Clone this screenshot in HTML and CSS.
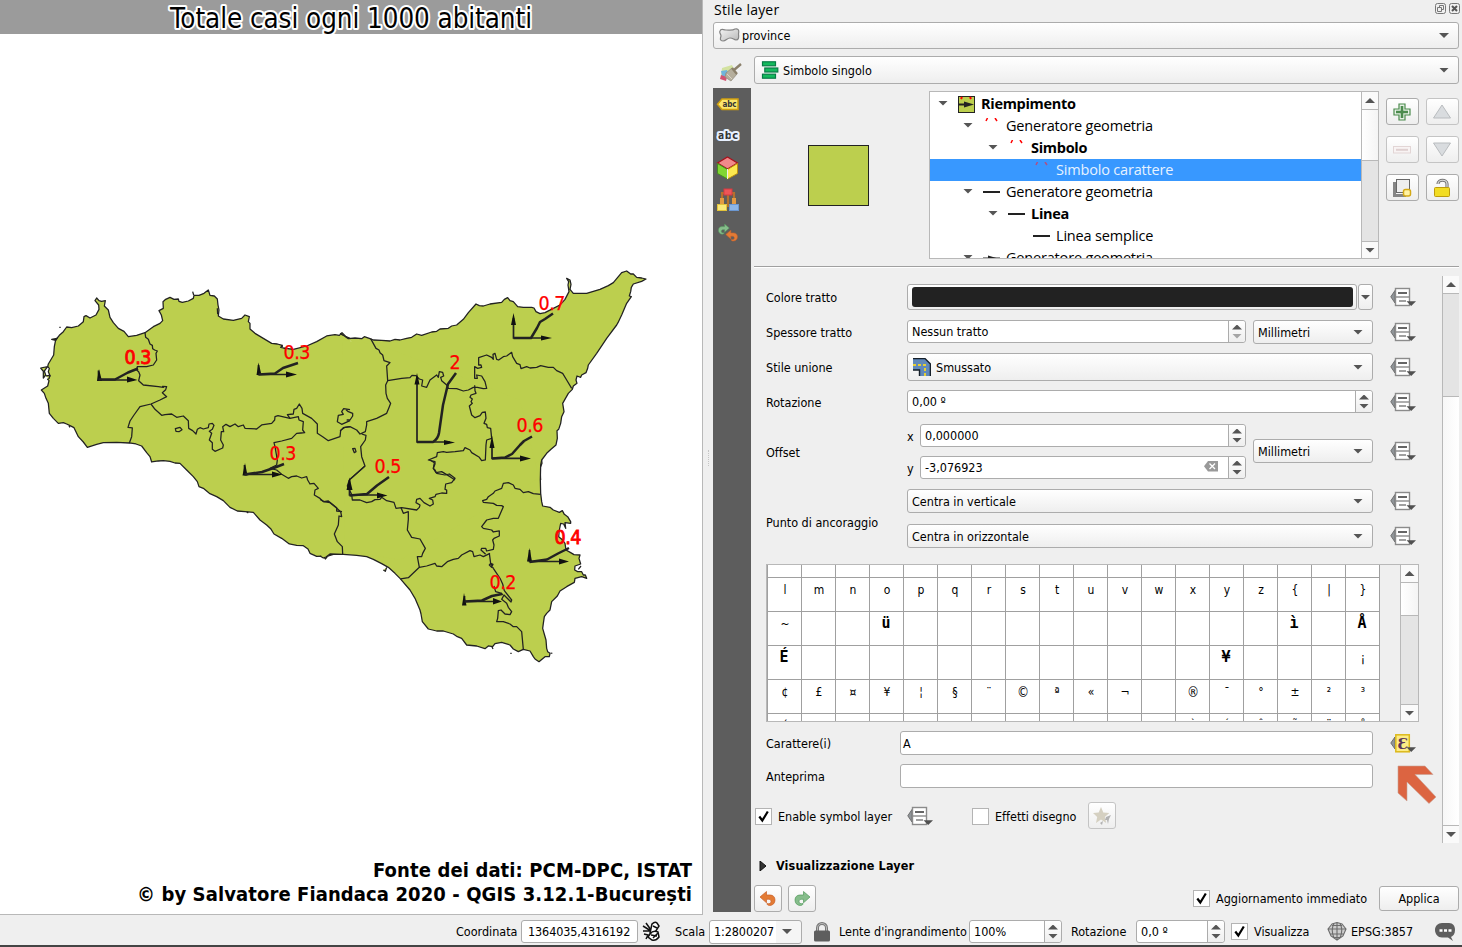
FILE: index.html
```html
<!DOCTYPE html>
<html lang="it">
<head>
<meta charset="utf-8">
<title>Stile layer</title>
<link rel="stylesheet" href="styles.css">
</head>
<body>
<svg width="0" height="0" class="sprite">
  <defs>
    <linearGradient id="grey" x1="0" y1="0" x2="1" y2="1"><stop offset="0" stop-color="#f4f4f4"/><stop offset="1" stop-color="#b9b9b9"/></linearGradient>
    <symbol id="dd" viewBox="0 0 26 20">
      <path d="M5 3.5L.8 9.8 5 16z" fill="#909599" stroke="#6e6e6e"/>
      <rect x="5.5" y="1.5" width="14" height="17" fill="#fff" stroke="#8b8b8b" stroke-width="1.4"/>
      <path d="M6 10h13" stroke="#8b8b8b" stroke-width="1.4"/>
      <path d="M8 6h9" stroke="#555" stroke-width="1.8"/><path d="M9 14h7" stroke="#777" stroke-width="1.4"/>
      <path d="M16.500 14.300h9.500L21.200 19z" fill="#505050"/>
    </symbol>
    <symbol id="undo" viewBox="0 0 18 18">
      <path d="M1 7L7.500 1.500V5h3.500c3 0 5 2 5 5s-2 5.500-5.500 5.500c-1.500 0-2.500-.8-2.500-2 2.500.6 4-.2 4-2 0-1.500-1-2.200-2.500-2.200h-2v3.500z" fill="#e37b35" stroke="#c9602a" stroke-width=".7"/>
    </symbol>
    <symbol id="redo" viewBox="0 0 18 18">
      <path d="M17 7L10.500 1.500V5H7C4 5 2 7 2 10s2 5.500 5.500 5.500c1.500 0 2.500-.8 2.500-2-2.500.6-4-.2-4-2 0-1.500 1-2.200 2.500-2.200h2v3.500z" fill="#86bd8b" stroke="#529a5b" stroke-width=".7"/>
    </symbol>
    <symbol id="check" viewBox="0 0 17 17"><path d="M4.300 8.500L7.300 12.500 12.800 3.500" fill="none" stroke="#000" stroke-width="2.200"/></symbol>
  </defs>
</svg>
<div class="app">
  <main class="workspace">
    <section class="map">
      <header class="map-title"><svg width="702" height="34"><text x="170" y="27.500" textLength="362" class="halo">Totale casi ogni 1000 abitanti</text></svg></header>
      <svg class="canvas" width="702" height="880" viewBox="0 34 702 880">
        <g class="coast">
          <g transform="translate(0 260) scale(.33333)">
            <path d="M1050 235L1038 230 1026 218 1018 226 1005 224 980 228 950 245 920 258 880 268 850 264 842 262 847 256 832 252 815 250 790 235 765 220 750 207 750 190 745 185 748 170 735 165 725 175 700 181 670 177 655 168 657 150 654 135 652 117 643 108 630 106 625 90 612 100 597 106 582 106 580 115 565 123 547 127 537 124 535 117 522 118 510 112 497 118 489 125 490 145 477 152 484 165 488 182 480 190 460 200 435 218 410 226 385 230 372 214 355 205 340 188 330 172 325 150 313 138 316 122 305 124 297 122 290 114 285 122 296 135 297 148 288 165 270 174 258 167 252 170 250 185 235 198 215 203 200 201 190 215 178 226 167 240 163 260 161 285 145 312 143 320 148 325 145 335 150 347 147 355 143 358 147 362 143 378 124 390 133 400 138 415 145 430 148 460 160 475 175 490 190 488 200 492 210 497 222 503 235 530 250 546 262 562 290 553 310 548 350 547 388 549 408 552 425 558 440 578 450 590 455 606 475 603 490 602 510 604 525 609 540 610 560 630 580 650 592 665 597 680 610 685 628 700 650 710 670 722 690 742 712 753 735 755 760 757 780 780 800 795 812 806 822 822 845 835 868 852 890 856 910 857 924 867 930 880 950 889 985 888 1000 883 1050 880"/>
            <path d="M155 238l16-3-4 6zM578 95l3 10M207 498l3 4M740 755l5 4M970 888l6 9 6-7M652 145l1 18M844 256l4 5M143 320l-21 4 8 10 0 20 7-9-4-12 6-8zM138 348l12-2-3 10M178 202h4" />
          </g>
          <g transform="translate(340 260) scale(.33333)">
            <path d="M0 220L10 226 25 236 45 234 65 236 73 230 90 236 100 240 125 241 150 243 165 238 180 240 200 235 215 232 230 222 245 226 275 216 290 214 300 207 325 205 335 198 350 195 370 178 385 158 408 132 418 137 430 138 450 132 485 127 493 118 503 113 510 122 520 125 533 140 550 142 575 142 582 144 588 155 600 161 615 158 640 145 660 135 675 118 687 95 684 75 686 65 680 55 690 60 693 73 690 88 700 100 740 100 780 88 805 77 820 68 845 38 860 33 872 42 880 42 890 52 905 54 918 57 905 64 880 72 874 82 872 95 868 108 874 110 860 130 845 165 834 188 830 195 800 235 770 280 745 315 743 325 738 338 725 345 722 352 711 348 708 360 711 370 700 378 697 388 685 400 668 430 672 455 665 470 662 490 656 508 651 512 652 535 648 555 633 568 620 580 605 600 606 610 600 625 602 660"/>
          </g>
          <g transform="translate(320 460) scale(.33333)">
            <path d="M665 0L662 15 661 60 662 100 665 125 668 138 690 142 700 150 718 157 727 152 733 163 743 170 752 185 752 190 735 188 737 205 731 192 722 190 718 210 716 230 728 240 735 250 738 270 752 278 762 284 780 285 777 295 782 312 765 318 764 330 773 335 785 335 790 345 796 345 800 355 785 350 765 355 763 367 740 380 720 393 712 408 695 425 690 450 680 460 673 470 670 490 668 505 678 540 680 565 683 575 690 580 688 590 675 590 657 605 645 597 640 590 630 573 610 568 595 575 580 567 570 555 545 547 525 551 518 560 505 558 495 566 470 558 440 555 425 535 412 530 400 522 370 513 350 513 325 507 307 485 303 462 300 450 285 415 270 390 240 355 225 340 205 322 185 311 160 298 140 290 110 286 70 283 30 282 18 291 10 294 0 288"/>
            <path d="M200 322l-4 12-6-4M692 579l5 1M571 580h4M515 558l4 9M775 328l8-10"/>
          </g>
        </g>
        <path class="land" d="M342 340L380 345 520 400 539 478 400 560 345 550z"/>
        <g class="border">
          <g transform="translate(0 260) scale(.33333)">
            <path d="M435 218L437 232 445 238 450 252 457 256 458 266 464 270 472 273 468 280 470 300 460 315 440 320 412 320 410 330 416 335 420 345 416 362 430 375 475 380 490 382 488 379 500 380 497 389 487 398 500 410 480 420 453 432 420 440 402 465 390 483 384 502 397 504 395 530 388 549"/>
            <path d="M453 432L465 448 485 466 495 464 515 462 530 472 550 468 565 482 566 505 578 512 588 522 592 508 600 503 610 507 625 503 627 492 637 490 642 496 637 508 628 514 635 520 628 540 637 548 637 568 645 574 668 564 670 555 662 540 664 515 671 515 668 500 678 493 690 500 705 492 715 500 730 495 735 505 770 507 785 495 815 490 824 480 825 470 834 467 870 475 895 470 897 480 910 485 908 510 914 518 903 519 890 520 875 535 845 543 822 548 825 560 832 600 830 615 810 625 830 630 845 643 865 655 875 650 890 648 905 654 920 650 923 660 930 672 942 670 955 685 945 690 943 705 960 715 970 725 990 728 1007 742 1022 755 1025 770 1017 768 1015 795 1003 822 1012 845 1027 860 1028 882"/>
            <path d="M870 475L862 464 880 462 882 448 890 445 898 432 906 445 908 460 935 475 952 492 952 520 968 530 985 542 1020 530 1022 512 1030 503 1050 500"/>
            <path d="M526 506L540 502 546 509 537 515 528 514z"/>
            <path d="M1050 449L1031 446 1025 455 1030 463 1015 466 1012 485 1025 493 1050 482"/>
          </g>
          <g transform="translate(340 260) scale(.33333)">
            <path d="M92 236L108 265 117 270 120 278 128 285 132 302 150 308 140 318 143 362 137 375 138 400 142 415 152 430 148 440 140 460 110 475 80 485 80 495 76 515 60 522 50 510 30 500 15 502 0 512M65 522L78 526 76 540 62 560 65 590 75 618 30 658"/>
            <path d="M18 449L25 455 38 460 38 468 30 480 20 480"/>
            <path d="M143 362L185 355 210 353 216 346 228 347 238 357 248 360 245 378 260 382 270 360 290 345 295 352 298 335 308 337 311 348 302 352 305 362 320 375 325 385 350 386 370 393 385 390 400 382 412 382 430 386 440 385 435 365 425 348 410 345 412 355 404 355 404 320 413 325 425 322 423 315 416 315 416 293 440 285 455 292 460 298 459 283 465 280 470 298 476 300 490 290 500 288 515 277 518 290 530 310 540 314 543 326 560 320 570 324 590 322 602 317 625 322 640 322 650 332 668 340 680 360 695 385"/>
            <path d="M404 376L405 392 408 400 393 405 390 412 397 417 393 425 397 430 388 438 395 465 405 473 420 467 427 457 436 456 438 475 432 490 440 493 442 503 452 505 455 535 440 540 438 555 436 600 425 602 418 592 395 578 390 570 375 563 370 572 345 575 320 577 310 575 292 578 290 590 265 600 285 605 285 612 280 625 288 638 305 635 330 650 345 660"/>
            <path d="M38 566L45 565 48 575 43 578z"/>
          </g>
          <g transform="translate(320 460) scale(.33333)">
            <path d="M0 118L12 125 25 123 50 143 50 153 66 155"/>
            <path d="M135 18L88 60 82 78 95 103 97 120 120 120 140 128 155 125 165 119 180 118 185 112 200 122 222 127 228 145 245 143 290 150 298 142 300 135 288 128 290 118 300 115 312 128 330 138 340 132 338 120 328 115 345 110 348 103 365 99 380 100 380 90 375 88 377 72 395 68 405 55 388 42 375 45 350 40 345 30 340 25 343 8 330 0"/>
            <path d="M243 143L250 160 265 155 265 178 262 210 275 232 300 237 316 265 308 280 305 290 292 290 298 322M242 357L265 353 298 322 320 318 345 310 350 318 365 320 382 305 400 298 415 295 425 285 450 272 458 275 462 290 480 285 490 290 510 280"/>
            <path d="M497 283L483 270 485 265 497 265 500 273 520 268 522 255 518 240 522 235 538 228 538 213 520 216 515 210 490 205 485 200 500 180 520 175 535 175 550 140 545 137 530 136 520 130 490 127 488 122 500 118 505 110 520 100 525 93 545 85 550 70 565 68 580 75 585 85 600 88 610 98 625 95 640 101 662 103"/>
            <path d="M508 280L512 310 508 315 515 322 519 313 512 310 520 325 530 340 540 355 548 372 553 392 575 420 573 426 552 405 545 418 560 430 565 442 575 455 570 464 555 462 543 450 535 452 533 475 530 485 550 485 570 492 580 500 590 500 605 515 610 568M522 378L527 395 545 400 548 405"/>
          </g>
        </g>
        <g class="axes">
          <path d="M98.500 370.500V380H134M258.500 365V374.500H292M244.500 465V474.500H278M349.500 480V495H383M417 377V442H450M513.500 318V338H546M492 442V458.300H525M529.500 550V561.500H564M464.500 596V601.500H498"/>
          <path class="heads" d="M97 381l2-12 3 12zM127 376.500l10.500 3.500-10.500 2.500zM256.500 375l2-12.500 3 12.500zM286 371.500l11 3-11 3zM242.500 475.500l2.500-12.500 2.500 12.500zM272 471.500l10.500 3-10.500 3zM346.500 490l3-12.500 3 12.500zM377 492.500l10.500 3-10.500 3zM414.500 384.500l2.500-11.500 2.500 11.500zM444 440l11 2.500-11 2.500zM511 325l2.500-12 2.500 12zM541 335.500l11 2.500-11 2.500zM489.500 448l2.500-12.500 2.500 12.500zM520 455.500l11 3-11 3zM527 561.500l2.500-13.500 2.500 13.500zM559 558.500l10 3-10 3zM462 605.500l2-12.500 2.500 12.500zM493 598l9 3.500-9 3z"/>
          <path class="curve" d="M98.500 379.500H115L128 372.500 138 368.500M258.500 374.500L275 373.500 283 368 298 363M244.500 474.500L262 472 275 467.500 284 464M349.500 495.500L367 494 377 485.500 389 477M417 442H433Q438 439 439 433L443 405 448 384 456 373M513.500 338H531L537 328 540 322 545 319 553 313.500M492 458.500L505 457.500 512 454 520 445 524 441 532 436.500M529.500 562L547 559.500 558 553.500 569 548M464.500 601.500L482 600.500 492 596 502 594"/>
        </g>
        <g class="values">
          <text x="124.500" y="364" textLength="27" class="strong">0.3</text><text x="283.500" y="359" textLength="27">0.3</text><text x="269.500" y="459.500" textLength="27">0.3</text>
          <text x="538.500" y="309.500" textLength="27">0.7</text><text x="449.500" y="369">2</text><text x="516.500" y="431.500" textLength="27">0.6</text>
          <text x="374.500" y="473" textLength="27">0.5</text><text x="554.500" y="543.500" textLength="27" class="strong">0.4</text><text x="489.500" y="589" textLength="27">0.2</text>
        </g>
        <g class="credits"><text x="373" y="876.500" textLength="319">Fonte dei dati: PCM-DPC, ISTAT</text><text x="137" y="900.500" textLength="555">© by Salvatore Fiandaca 2020 - QGIS 3.12.1-București</text></g>
      </svg>
    </section>
    <div class="splitter"><i></i></div>
    <aside class="dock">
      <header class="dock-title"><span>Stile layer</span>
        <svg width="26" height="12" fill="none" stroke="#777"><rect x=".5" y=".5" width="10" height="10" rx="2"/><path d="M4.500 2.500h4v4M2.500 4.500h4v4h-4zM4.500 2.500v2M8.500 6.500h-2"/><rect x="14.500" y=".5" width="10" height="10" rx="2"/><path d="M17 3l5 5M22 3l-5 5" stroke="#555" stroke-width="2"/></svg>
      </header>
      <div class="combo layer"><svg width="21" height="16"><path d="M1 3c1-3 3-1 6-1s6 1 9-1c4-1 4 2 3.500 5 .5 4 0 6-2.500 6-3-1-3-2-6-2s-4 3-7 3-3-2-2-5c0-2-2-3-1-5z" fill="url(#grey)" stroke="#848484" stroke-width="1.200"/></svg><span>province</span><b class="down"></b></div>
      <div class="dock-body">
        <nav class="tabs">
          <div class="tab on"><svg width="24" height="20"><path d="M3 6l10-3 4 8-9 5-6-2z" fill="#d3e2a0"/><path d="M2 9l6-1 2 6H3z" fill="#6fb4dc"/><path d="M2 13l6 2-1 4-6-2z" fill="#d25372"/><path d="M7 11l6-5 5 6-6 7-6-4z" fill="#b5ae9c" stroke="#8e887a" stroke-width=".7"/><path d="M13 6l5 6M15 8l7-6" stroke="#8b806b" stroke-width="2.400"/><path d="M8 12l5 5" stroke="#d9d4c5"/></svg></div>
          <div class="tab"><svg width="24" height="16"><path d="M6 3h16v10.500H6L1.500 8.300z" fill="#fbe66b" stroke="#cf9f10" stroke-width="1.500"/><text x="6.500" y="11" textLength="14" class="abc small">abc</text></svg></div>
          <div class="tab up1"><svg width="24" height="16"><text x="2" y="12" textLength="20" class="abc outlined">abc</text></svg></div>
          <div class="tab"><svg width="24" height="24"><path d="M11.500 1l10 6-10 6-10-6z" fill="#f08a8a" stroke="#a8101c" stroke-width="1.200"/><path d="M1.500 7.500l10 6V23l-10-5.500z" fill="#82d633" stroke="#458e20"/><path d="M21.500 7.500l-10 6V23l10-5.500z" fill="#fce94f" stroke="#bd930e"/><path d="M11.500 13v10" stroke="#eee"/></svg></div>
          <div class="tab"><svg width="24" height="24"><path d="M6 16V4M18 16V4M7 5h10M12 7v12" fill="none" stroke="#b5702e" stroke-width="2.200"/><path d="M4 10v6h4v-6M16 10v6h4v-6" fill="#e39a42"/><rect x="8" y="1" width="8" height="6" fill="#ee5558" stroke="#d83b40"/><rect x="1.500" y="16.500" width="9" height="6" fill="#fbe879" stroke="#e2c33a"/><rect x="13.500" y="16.500" width="9" height="6" fill="#8db5e6" stroke="#6b97d1"/></svg></div>
          <div class="tab history"><svg width="24" height="20"><use href="#redo" x="1" y="0" width="13" height="13"/><use href="#undo" x="9" y="6" width="14" height="14"/></svg></div>
        </nav>
        <div class="panel">
          <div class="combo renderer"><svg width="18" height="18" fill="#12ba5c" stroke="#087a46" stroke-width="1.200"><rect x="1.500" y=".8" width="13" height="4"/><rect x="3.800" y="7" width="13" height="4"/><rect x="1.500" y="13.200" width="13" height="4"/></svg><span>Simbolo singolo</span><b class="down"></b></div>
          <div class="symbol-area">
            <div class="preview"><i></i></div>
            <div class="tree">
              <ul>
                <li class="l0 bold"><b class="down"></b><svg width="17" height="17"><rect x=".5" y=".5" width="16" height="16" fill="#bccf4e" stroke="#222"/><path d="M1 8.500h8" stroke="#222" stroke-width="2"/><path d="M6 5.500l10 3-10 3z" fill="#222"/><path d="M4 1L3 3M12 1l1 2" stroke="red" stroke-width="2"/></svg><span>Riempimento</span></li>
                <li class="l1"><b class="down"></b><svg width="17" height="17"><path d="M4.500 0L3 3M12 0l2 3" stroke="red" stroke-width="1.500"/></svg><span>Generatore geometria</span></li>
                <li class="l2 bold"><b class="down"></b><svg width="17" height="17"><path d="M4.500 0L3 3M12 0l2 3" stroke="red" stroke-width="1.500"/></svg><span>Simbolo</span></li>
                <li class="l3 selected"><svg width="17" height="17"><path d="M4.500 0L3 3M12 0l2 3" stroke="#b14f83" stroke-width="1.500"/></svg><span>Simbolo carattere</span></li>
                <li class="l1"><b class="down"></b><svg width="17" height="17"><path d="M0 8h17" stroke="#222" stroke-width="2"/></svg><span>Generatore geometria</span></li>
                <li class="l2 bold"><b class="down"></b><svg width="17" height="17"><path d="M0 8h17" stroke="#222" stroke-width="2"/></svg><span>Linea</span></li>
                <li class="l3"><svg width="17" height="17"><path d="M0 8h17" stroke="#222" stroke-width="2"/></svg><span>Linea semplice</span></li>
                <li class="l1"><b class="down"></b><svg width="17" height="17"><path d="M0 8.500h17" stroke="#222" stroke-width="2"/><path d="M5 5.500l10 3-10 3z" fill="#222"/></svg><span>Generatore geometria</span></li>
              </ul>
              <div class="scroll tree-scroll"><i><b class="up"></b></i><u></u><s></s><i><b class="down"></b></i></div>
            </div>
            <div class="tools">
              <button><svg width="20" height="20"><path d="M7 2h6v5h5v6h-5v5H7v-5H2V7h5z" fill="#e6f1e6" stroke="#4b8b4d" stroke-width="1.200"/><path d="M10 4v12M4 10h12" stroke="#4b8b4d" stroke-width="2.600"/></svg></button>
              <button class="off"><svg width="20" height="20"><path d="M10 3l8.500 13h-17z" fill="#d9dcdf" stroke="#b9bcbf"/></svg></button>
              <button class="off"><svg width="20" height="20"><rect x="1.500" y="6.500" width="17" height="6.500" fill="#f8f3f3" stroke="#e2d5d5"/><path d="M4 9.800h12" stroke="#dfd0d0" stroke-width="2"/></svg></button>
              <button class="off"><svg width="20" height="20"><path d="M10 16L1.500 3h17z" fill="#d9dcdf" stroke="#b9bcbf"/></svg></button>
              <button><svg width="20" height="20"><path d="M2.500 4v13.500H14" fill="none" stroke="#858585" stroke-width="3"/><rect x="4.500" y="1.500" width="13" height="13" fill="#eee" stroke="#686868"/><rect x="11.500" y="11.500" width="7" height="6.500" rx="2" fill="#fff2a3" stroke="#d4a916" stroke-width="1.500"/></svg></button>
              <button><svg width="20" height="20"><path d="M6 6c0-5 9-5 9 0v5" fill="none" stroke="#777" stroke-width="3.200"/><path d="M6 6c0-5 9-5 9 0v5" fill="none" stroke="#ddd" stroke-width="1.200"/><rect x="2.500" y="9.500" width="15" height="9" rx="1" fill="#f2dc23" stroke="#bd9b0d"/></svg></button>
            </div>
          </div>
          <div class="form-area">
            <div class="form">
              <div class="row"><label>Colore tratto</label><div class="color"><i></i></div><div class="color-menu"><b class="down"></b></div><svg class="dd"><use href="#dd"/></svg></div>
              <div class="row"><label>Spessore tratto</label><div class="spin w339"><span>Nessun tratto</span><em><b class="up"></b><b class="down pale"></b></em></div><div class="combo unit"><span>Millimetri</span><b class="down"></b></div><svg class="dd"><use href="#dd"/></svg></div>
              <div class="row join"><label>Stile unione</label><div class="combo wide tall"><svg width="18" height="18"><path d="M0 .6h12l5.400 5.400v12H7V12H0z" fill="#6189ba"/><path d="M0 .6h12l5.400 5.400v12M0 12h6.500v6" fill="none" stroke="#16202a" stroke-width="1.400"/><path d="M0 7h12v11" fill="none" stroke="#e5cf35" stroke-width="2" stroke-dasharray="3 2"/></svg><span>Smussato</span><b class="down"></b></div><svg class="dd"><use href="#dd"/></svg></div>
              <div class="row"><label>Rotazione</label><div class="spin w466"><span>0,00 º</span><em><b class="up"></b><b class="down"></b></em></div><svg class="dd"><use href="#dd"/></svg></div>
              <div class="row double"><label>Offset</label>
                <div class="xy">
                  <div><span class="axis">x</span><div class="spin w326"><span>0,000000</span><em><b class="up"></b><b class="down"></b></em></div></div>
                  <div><span class="axis">y</span><div class="spin w326"><span>-3,076923</span><svg class="clear" width="14" height="11"><path d="M4 0h10v10.500H4L0 5.300z" fill="#999"/><path d="M5.500 2.500l5.500 5.500M11 2.500L5.500 8" stroke="#fff" stroke-width="1.300"/></svg><em><b class="up"></b><b class="down"></b></em></div></div>
                </div>
                <div class="combo unit"><span>Millimetri</span><b class="down"></b></div><svg class="dd"><use href="#dd"/></svg></div>
              <div class="row anchor"><label>Punto di ancoraggio</label>
                <div class="pair">
                  <div><div class="combo wide"><span>Centra in verticale</span><b class="down"></b></div><svg class="dd"><use href="#dd"/></svg></div>
                  <div><div class="combo wide"><span>Centra in orizzontale</span><b class="down"></b></div><svg class="dd"><use href="#dd"/></svg></div>
                </div>
              </div>
              <div class="chars">
                <div class="glyphs">
                  <i></i><i></i><i></i><i></i><i></i><i></i><i></i><i></i><i></i><i></i><i></i><i></i><i></i><i></i><i></i><i></i><i></i><i></i>
                  <i>l</i><i>m</i><i>n</i><i>o</i><i>p</i><i>q</i><i>r</i><i>s</i><i>t</i><i>u</i><i>v</i><i>w</i><i>x</i><i>y</i><i>z</i><i>{</i><i>|</i><i>}</i>
                  <i>~</i><i></i><i></i><i class="mono">ü</i><i></i><i></i><i></i><i></i><i></i><i></i><i></i><i></i><i></i><i></i><i></i><i class="mono">ì</i><i></i><i class="mono">Å</i>
                  <i class="mono">É</i><i></i><i></i><i></i><i></i><i></i><i></i><i></i><i></i><i></i><i></i><i></i><i></i><i class="mono">¥</i><i></i><i></i><i></i><i>¡</i>
                  <i>¢</i><i>£</i><i>¤</i><i>¥</i><i>¦</i><i>§</i><i>¨</i><i class="sign">©</i><i>ª</i><i>«</i><i>¬</i><i></i><i class="sign">®</i><i>¯</i><i>°</i><i>±</i><i>²</i><i>³</i>
                  <i>´</i><i></i><i></i><i></i><i></i><i></i><i></i><i></i><i></i><i></i><i></i><i></i><i>À</i><i>Á</i><i>Â</i><i>Ã</i><i>Ä</i><i>Å</i>
                </div>
                <div class="scroll char-scroll"><i><b class="up"></b></i><u></u><s></s><i><b class="down"></b></i></div>
              </div>
              <div class="row text"><label>Carattere(i)</label><div class="input">A</div><svg class="dd" viewBox="0 0 26 20"><path d="M5 4L.8 10 5 16z" fill="#909599" stroke="#6e6e6e"/><rect x="5.800" y="1.800" width="13.500" height="17" fill="#fcec86" stroke="#dcb91b" stroke-width="1.500"/><text x="7.500" y="15.500" class="eps">Ɛ</text><path d="M16.500 14.300H26L21.200 19z" fill="#505050"/></svg></div>
              <div class="row text"><label>Anteprima</label><div class="input"></div><svg class="pointer" width="40" height="40"><path d="M1 1h27l8 8.500H18L39 32l-7 6.500L10 17v19L1 28z" fill="#dc6441" stroke="#c8a193" stroke-width=".6"/></svg></div>
              <div class="row options"><span class="box"><svg width="17" height="17"><use href="#check"/></svg></span><span class="enable">Enable symbol layer</span><svg class="dd"><use href="#dd"/></svg><span class="box effects"></span><span class="fx">Effetti disegno</span><button class="off"><svg width="20" height="20"><path d="M9 1l2.300 5.500 6 .5-4.500 4 1.400 6L9 13.500 4 17l1.200-6L1 7l5.700-.5z" fill="#d5d0c1"/><path d="M19 9l-5 2-1 3 2 0 1 4 1-5zM8 17l3-2-1 4z" fill="#b2b2b2"/></svg></button></div>
            </div>
            <div class="scroll form-scroll"><i><b class="up"></b></i><s></s><u></u><i><b class="down"></b></i></div>
          </div>
          <div class="rendering"><svg width="8" height="10"><path d="M1 0l6 5-6 5z" fill="#333" stroke="#111"/></svg><span>Visualizzazione Layer</span></div>
          <div class="actions"><button><svg width="18" height="18"><use href="#undo"/></svg></button><button class="redo"><svg width="18" height="18"><use href="#redo"/></svg></button><span class="box live"><svg width="17" height="17"><use href="#check"/></svg></span><span class="live-label">Aggiornamento immediato</span><button class="apply">Applica</button></div>
        </div>
      </div>
    </aside>
  </main>
  <footer class="status">
    <span class="coord">Coordinata</span><div class="input coord-in">1364035,4316192</div>
    <svg class="bug" width="20" height="22" fill="none" stroke="#111" stroke-width="1.500"><path d="M4 2l5 7M1 5l8 5M1 10h8"/><path d="M10 3q3-3 5-1l2 3-5 8-4-1z" fill="#fff"/><path d="M8 13q3-4 8-2l1 5q-3 4-7 3l-4-3z" fill="#fff"/><path d="M11 5l4 2M9 14l6 1M11 17l5-5M2 13l4 1-2 4" /></svg>
    <span class="scale">Scala</span><div class="combo scale-in"><span>1:2800207</span><b class="down"></b></div>
    <svg class="lock" width="16" height="20"><path d="M3.500 10V6c0-6 9-6 9 0v4" fill="none" stroke="#777" stroke-width="3"/><path d="M3.500 10V6c0-6 9-6 9 0v4" fill="none" stroke="#ccc" stroke-width=".8"/><rect x="0" y="8.500" width="16" height="11" rx="1.500" fill="#5e5e5e"/></svg>
    <span class="lens">Lente d'ingrandimento</span><div class="spin lens-in"><span>100%</span><em><b class="up"></b><b class="down"></b></em></div>
    <span class="rot">Rotazione</span><div class="spin rot-in"><span>0,0 º</span><em><b class="up"></b><b class="down"></b></em></div>
    <span class="box show"><svg width="17" height="17"><use href="#check"/></svg></span><span class="vis">Visualizza</span>
    <svg class="globe" width="20" height="19"><path d="M5 2l5-1.500L15 2l4 5-3 7-6 4-6-4-3-7z" fill="#ccc"/><path d="M.5 7h19M3 12h14M5 3.500h10M6 15.500h8M10 .5v17M7 1.500Q3.500 8 7 16M13 1.500q3.500 6.500 0 14.500M5 2L1 7l3 7 6 4 6-4 3-7-4-5-5-1.500z" fill="none" stroke="#6c6c6c" stroke-width="1.100"/></svg>
    <span class="epsg">EPSG:3857</span>
    <svg class="bubble" width="21" height="20"><path d="M7 1h7c4 0 6 3 6 7s-2 6-4 7l2 4-5-3.500H7C3 15.500 0 12 0 8s3-7 7-7z" fill="#5e5e5e"/><path d="M4.500 8.500h3M9 8.500h3M13.500 8.500h3" stroke="#fff" stroke-width="2.400"/></svg>
  </footer>
</div>
</body>
</html>
```
FILE: styles.css
```css
* { box-sizing: border-box; }
body { margin: 0; background: #efefef; font: 12.5px/16px "DejaVu Sans Condensed", "DejaVu Sans", sans-serif; font-stretch: condensed; color: #000; letter-spacing: -.01px; }
svg { display: block; flex: none; }
.sprite { position: absolute; }
button { font: inherit; letter-spacing: inherit; padding: 0; color: #000; }
.app { width: 1462px; height: 947px; overflow: hidden; display: flex; flex-direction: column; white-space: nowrap; }
.workspace { display: flex; height: 915px; flex: none; }

/* Map canvas */
.map { width: 703px; height: 915px; background: #fff; border-right: 1px solid #b8b8b8; border-bottom: 1px solid #b8b8b8; }
.map-title { height: 34px; background: #9b9b9b; }
.halo { font: 27.5px "DejaVu Sans Condensed", "DejaVu Sans", sans-serif; font-stretch: condensed; letter-spacing: 0; paint-order: stroke; stroke: #fff; stroke-width: 4px; stroke-linejoin: round; }
.coast path { fill: #bccf4e; stroke: #222; stroke-width: 3.8px; stroke-linejoin: round; }
.land { fill: #bccf4e; }
.border path { fill: none; stroke: #222; stroke-width: 3.8px; stroke-linejoin: round; }
.axes path { fill: none; stroke: #222; stroke-width: 1.7px; }
.axes .heads { fill: #111; stroke: none; }
.axes .curve { stroke-width: 2.5px; stroke-linejoin: round; }
.values text { font: 19.5px "DejaVu Sans Condensed", "DejaVu Sans", sans-serif; font-stretch: condensed; letter-spacing: 0; fill: #f00; stroke: #f00; stroke-width: .25px; }
.values .strong { stroke-width: .8px; }
.credits text { font: bold 20px "DejaVu Sans Condensed", "DejaVu Sans", sans-serif; font-stretch: condensed; letter-spacing: 0; }

.splitter { width: 10px; display: flex; align-items: center; justify-content: center; }
.splitter i { height: 16px; border-left: 1px dotted #c5c5c5; }

/* Shared controls */
.down, .up { width: 10px; height: 5px; flex: none; background: #555; clip-path: polygon(0 0, 100% 0, 50% 100%); }
.up { clip-path: polygon(50% 0, 100% 100%, 0 100%); }
.down.pale { background: #a5a5a5; }
.combo, .color, .color-menu, button { border: 1px solid #acacac; border-radius: 3px; background: linear-gradient(#fff, #eee); }
.combo { display: flex; align-items: center; padding: 0 9px 0 4px; }
.combo > span, .spin > span { padding-top: 1px; }
.combo .down { margin-left: auto; }
.spin, .input { height: 23px; border: 1px solid #acacac; border-radius: 3px; background: #fff; display: flex; align-items: center; padding-left: 4px; flex: none; }
.spin em { margin-left: auto; width: 17px; height: 21px; border-left: 1px solid #acacac; background: linear-gradient(#fff, #eee); display: flex; flex-direction: column; align-items: center; justify-content: center; gap: 4px; border-radius: 0 3px 3px 0; }
.box { width: 17px; height: 17px; border: 1px solid #b4b4b4; background: #fff; flex: none; }
.box svg { margin: -1px; }
.scroll { width: 17px; flex: none; display: flex; flex-direction: column; border-left: 1px solid #b8b8b8; }
.scroll i { height: 17px; display: flex; align-items: center; justify-content: center; background: #fafafa; flex: none; }
.scroll u { background: linear-gradient(90deg, #fff, #f4f4f4); }
.scroll s { background: #e4e4e4; flex: 1; }
button { display: flex; align-items: center; justify-content: center; width: 33px; height: 27px; }
button.off { border-color: #c4c4c4; }

/* Dock */
.dock { width: 749px; display: flex; flex-direction: column; }
.dock-title { height: 22px; display: flex; justify-content: space-between; font: 14px/20px "Open Sans", sans-serif; letter-spacing: .2px; padding: 0 1px; }
.dock-title svg { margin: 3px 0 0; }
.layer { width: 746px; height: 27px; flex: none; padding-left: 5px; }
.layer span { margin-left: 2px; padding-top: 0; }
.dock-body { display: flex; height: 866px; }
.tabs { width: 38px; height: 863px; background: #5d5d5d; padding-bottom: 20px; }
.tab { height: 32px; display: flex; align-items: center; padding-left: 3px; }
.tab.on { height: 39px; background: #efefef; padding: 7px 0 0 6px; }
.tab.up1 { padding-bottom: 3px; }
.tab.history { height: 33px; }
.abc { font: bold 11px "DejaVu Sans Condensed", "DejaVu Sans", sans-serif; fill: #333; letter-spacing: 0; }
.abc.small { font-size: 8px; }
.abc.outlined { paint-order: stroke; stroke: #e7f0ff; stroke-width: 4px; stroke-linejoin: round; }
.panel { width: 708px; padding: 7px 0 0 3px; display: flex; flex-direction: column; }
.renderer { width: 705px; height: 28px; flex: none; padding-left: 6px; }
.renderer span { margin-left: 4px; }
.symbol-area { height: 176px; display: flex; margin-top: 7px; }
.preview { width: 175px; display: flex; padding: 54px 0 0 54px; }
.preview i { width: 61px; height: 61px; background: #bccf4e; border: 1px solid #222; }
.tree { width: 450px; height: 168px; border: 1px solid #b8b8b8; background: #fff; display: flex; overflow: hidden; }
.tree ul { margin: 0; padding: 1px 0 0; list-style: none; width: 431px; height: 166px; overflow: hidden; }
.tree li { height: 22px; display: flex; align-items: center; font: 14.5px/22px "Open Sans", sans-serif; letter-spacing: -.18px; }
.tree li svg { margin: 0 6px 0 10px; }
.tree li .down { margin-bottom: 2px; }
.tree .bold { font-weight: bold; letter-spacing: -.3px; }
.tree .l0 { padding-left: 8px; }
.tree .l1 { padding-left: 33px; }
.tree .l2 { padding-left: 58px; }
.tree .l3 { padding-left: 93px; }
.tree .selected { background: #3898ff; color: #e6f2ff; }
.tree-scroll { width: 17px; height: 166px; }
.tree-scroll u { height: 52px; border: solid #b8b8b8; border-width: 1px 0; }
.tree-scroll i:last-child, .char-scroll i:last-child { border-top: 1px solid #b8b8b8; }
.tools { display: grid; grid-template-columns: 33px 33px; grid-auto-rows: 27px; gap: 11px 7px; padding: 7px 0 0 7px; align-content: start; }
.tools svg { margin-left: -1px; }

/* Symbol form */
.form-area { border-top: 1px solid #a0a0a0; margin-top: -1px; height: 576px; flex: none; display: flex; padding-top: 9px; box-shadow: inset 0 1px #fff; }
.form { width: 688px; flex: none; padding: 4px 0 0 12px; }
.row { display: flex; height: 35px; align-items: flex-start; }
.row > label { width: 141px; line-height: 35px; flex: none; }
.color { width: 450px; height: 26px; margin-top: 4px; padding: 3px 4px; }
.color i { display: block; height: 20px; margin-top: -1px; border-radius: 3px; background: #222; width: 441px; }
.color-menu { width: 15px; height: 26px; margin: 4px 0 0 1px; display: flex; align-items: center; justify-content: center; }
.dd { width: 26px; height: 20px; margin: 7px 0 0 17px; }
.row > .spin { margin-top: 5px; }
.w339 { width: 339px; } .w466 { width: 466px; } .w326 { width: 326px; }
.unit { width: 120px; height: 24px; margin: 5px 0 0 7px; }
.wide { width: 466px; height: 24px; margin-top: 5px; }
.wide.tall { height: 28px; margin-top: 3px; padding-left: 5px; }
.tall span { margin-left: 5px; }
.row.double { height: 64px; }
.double > label { line-height: 65px; }
.xy > div { display: flex; height: 32px; padding-top: 4px; }
.axis { width: 13px; line-height: 25px; }
.clear { margin: 0 0 2px auto; }
.spin .clear + em { margin-left: 10px; }
.double .unit { margin-top: 19px; }
.double > .dd { margin-top: 21px; }
.row.anchor { height: 70px; }
.anchor > label { line-height: 77px; }
.pair > div { display: flex; height: 35px; }
.chars { width: 653px; height: 158px; margin: 10px 0 5px; border: 1px solid #b8b8b8; display: flex; justify-content: space-between; overflow: hidden; }
.glyphs { display: grid; grid-template-columns: repeat(18, 34px); grid-template-rows: 13px repeat(5, 34px); border-left: 1px solid #a0a0a0; height: 183px; }
.glyphs i { font-style: normal; font-size: 12px; background: #fff; border: solid #a0a0a0; border-width: 0 1px 1px 0; text-align: center; line-height: 25px; padding-left: 1px; }
.glyphs .mono { font: bold 15px/22px "DejaVu Sans Mono", monospace; padding: 0 1px 0 0; }
.glyphs .sign { font-size: 13.5px; }
.char-scroll { width: 18px; height: 156px; }
.char-scroll u { height: 34px; border: solid #b8b8b8; border-width: 1px 0; }
.row.text { height: 33px; }
.text > label { width: 134px; line-height: 33px; }
.text .input { width: 473px; height: 24px; margin-top: 4px; padding: 1px 0 0 2px; }
.text .dd { margin-top: 6px; }
.eps { font: bold 15px "DejaVu Serif", serif; fill: #5b365b; }
.pointer { margin: 5px -10px -20px 24px; }
.row.options { height: 47px; align-items: center; margin-left: -11px; }
.enable { width: 115px; margin-left: 6px; }
.options .dd { margin: -2px 0 0 14px; }
.effects { margin-left: 39px; }
.fx { width: 82px; margin-left: 6px; }
.options button { width: 28px; margin: -2px 0 0 11px; }
.options .box { margin-top: -1px; }
.form-scroll { height: 567px; width: 17px; }
.form-scroll s { height: 104px; flex: none; border: solid #b8b8b8; border-width: 1px 0; }
.form-scroll u { flex: 1; background: linear-gradient(90deg, #f7f7f7, #fff); border-bottom: 1px solid #b8b8b8; }
.rendering { height: 43px; display: flex; align-items: center; padding-left: 5px; font-weight: bold; letter-spacing: .12px; flex: none; padding-top: 4px; }
.rendering span { margin-left: 9px; }
.actions { display: flex; align-items: center; height: 27px; flex: none; }
.actions button { width: 28px; }
.actions .redo { margin-left: 6px; }
.live { margin-left: 377px; }
.live-label { width: 152px; margin-left: 6px; letter-spacing: .02px; }
.actions .apply { width: 80px; height: 25px; margin-left: 11px; padding-top: 1px; }

/* Status bar */
.status { height: 32px; flex: none; display: flex; align-items: center; padding: 3px 0 0 456px; border-bottom: 2px solid #444; }
.status > span { flex: none; }
.status > .coord, .status > .scale, .status > .lens, .status > .rot, .status > .epsg { padding-top: 1px; }
.coord { width: 65px; }
.coord-in { width: 117px; padding-left: 6px; letter-spacing: -.1px; }
.bug { margin-left: 4px; }
.scale { width: 34px; margin-left: 13px; }
.scale-in { width: 93px; height: 24px; padding-left: 4px; letter-spacing: -.1px; background: linear-gradient(90deg, #fff 66px, #f5f5f5 66px); }
.lock { margin-left: 12px; }
.lens { width: 130px; margin-left: 9px; letter-spacing: 0; }
.lens-in { width: 93px; }
.rot { width: 65px; margin-left: 9px; }
.rot-in { width: 89px; }
.status .show { margin-left: 6px; }
.vis { width: 66px; margin-left: 6px; }
.globe { margin-left: 7px; }
.epsg { width: 77px; margin-left: 4px; letter-spacing: 0; }
.bubble { margin-left: 7px; }
```
